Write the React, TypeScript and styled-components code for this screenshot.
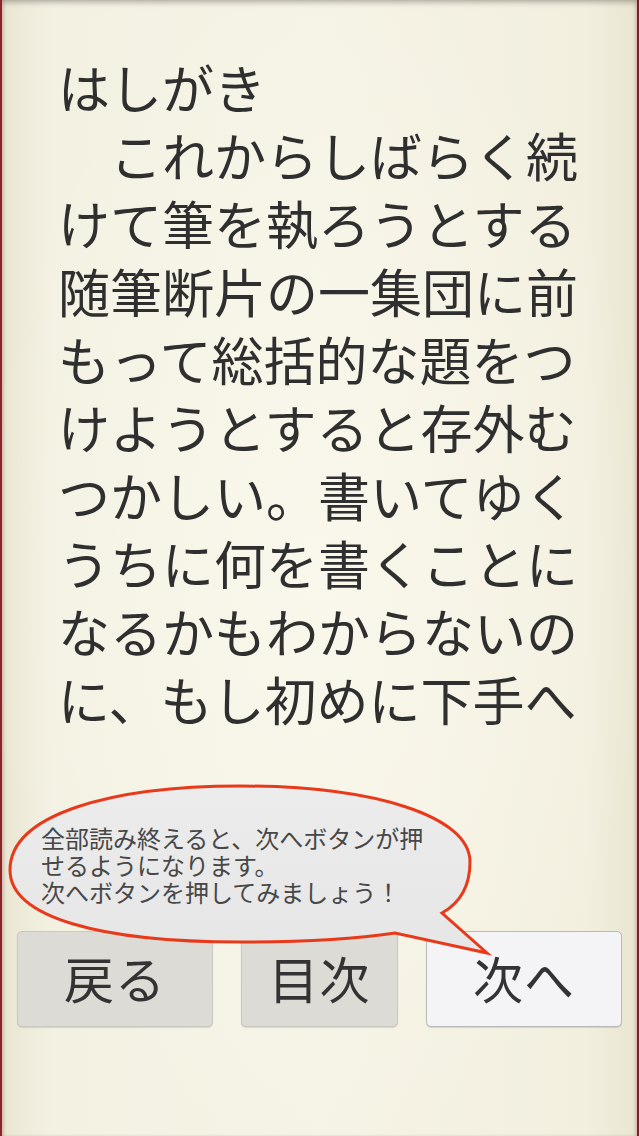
import styled, { createGlobalStyle } from "styled-components"

const GlobalStyle = createGlobalStyle`
  html, body {
    margin: 0;
    padding: 0;
    background: #eeecdc;
  }
  body {
    font-family: "Noto Sans CJK JP", "Noto Sans", sans-serif;
  }
`

const Page = styled.main`
  position: relative;
  box-sizing: border-box;
  width: 639px;
  height: 1136px;
  display: flex;
  flex-direction: column;
  padding: 0 0 109px;
  overflow: hidden;
  border-left: 2px solid #8a2626;
  border-right: 2px solid #7e1f1f;
  background:
    radial-gradient(ellipse at 50% 50%, rgba(250, 248, 236, 0.9) 0%, rgba(246, 243, 228, 0) 75%),
    linear-gradient(90deg, #e9e6d2 0%, #f3f1e2 8%, #f5f3e5 50%, #f2efdf 92%, #e8e5d0 100%);
  box-shadow:
    inset 0 6px 5px -3px rgba(120, 120, 110, 0.45),
    inset 3px 0 3px -1px rgba(200, 150, 150, 0.5),
    inset -3px 0 3px -1px rgba(200, 150, 150, 0.45);
`

const Body = styled.section`
  flex: 1;
  padding: 53px 0 0 56px;
  color: #2f2f2f;
  font-size: 52px;
  line-height: 68px;
`

const Line = styled.div`
  white-space: nowrap;
`

const ButtonRow = styled.nav`
  display: flex;
  gap: 28px;
  padding-left: 15px;
`

const NavButton = styled.button<{ $width: number; $active?: boolean }>`
  box-sizing: border-box;
  width: ${({ $width }) => $width}px;
  height: 96px;
  display: flex;
  align-items: center;
  justify-content: center;
  padding: 0 0 4px;
  border: 1px solid ${({ $active }) => ($active ? "#b9b9b9" : "#c9c8c1")};
  border-radius: 5px;
  background: ${({ $active }) => ($active ? "#f4f4f6" : "#dcdbd6")};
  box-shadow: 0 1px 1px rgba(0, 0, 0, 0.12);
  color: #333;
  font-family: "Noto Sans CJK JP", "Noto Sans", sans-serif;
  font-size: 50px;
  letter-spacing: 1px;
`

const Bubble = styled.aside`
  position: absolute;
  left: 0;
  top: 770px;
  width: 500px;
  height: 200px;
`

const BubbleShape = styled.svg`
  position: absolute;
  inset: 0;
`

const BubbleText = styled.div`
  position: absolute;
  left: 39px;
  top: 54px;
  color: #474747;
  font-size: 24px;
  line-height: 27px;
  white-space: nowrap;
`

const lines = [
  "はしがき",
  "\u3000これからしばらく続",
  "けて筆を執ろうとする",
  "随筆断片の一集団に前",
  "もって総括的な題をつ",
  "けようとすると存外む",
  "つかしい。書いてゆく",
  "うちに何を書くことに",
  "なるかもわからないの",
  "に、もし初めに下手へ",
]

const hint = ["全部読み終えると、次へボタンが押", "せるようになります。", "次へボタンを押してみましょう！"]

export default function App() {
  return (
    <>
      <GlobalStyle />
      <Page>
        <Body>
          {lines.map((line, i) => (
            <Line key={i}>{line}</Line>
          ))}
        </Body>

        <ButtonRow>
          <NavButton $width={196}>戻る</NavButton>
          <NavButton $width={157}>目次</NavButton>
          <NavButton $width={196} $active>
            次へ
          </NavButton>
        </ButtonRow>

        <Bubble>
          <BubbleShape width="500" height="200" viewBox="0 0 500 200">
            <defs>
              <linearGradient id="bubbleFill" x1="0" y1="0" x2="0" y2="1">
                <stop offset="0" stopColor="#ececec" />
                <stop offset="1" stopColor="#e6e6e6" />
              </linearGradient>
            </defs>
            <path
              d="M 8 100 C 8 44, 110 16, 238 16 C 372 16, 468 46, 468 92 C 468 118, 456 134, 440 143 L 485 183 L 393 163 C 345 170, 292 172, 238 172 C 100 172, 8 148, 8 100 Z"
              fill="url(#bubbleFill)"
              stroke="#e8391b"
              strokeWidth="3"
            />
          </BubbleShape>
          <BubbleText>
            {hint.map((line, i) => (
              <Line key={i}>{line}</Line>
            ))}
          </BubbleText>
        </Bubble>
      </Page>
    </>
  )
}
